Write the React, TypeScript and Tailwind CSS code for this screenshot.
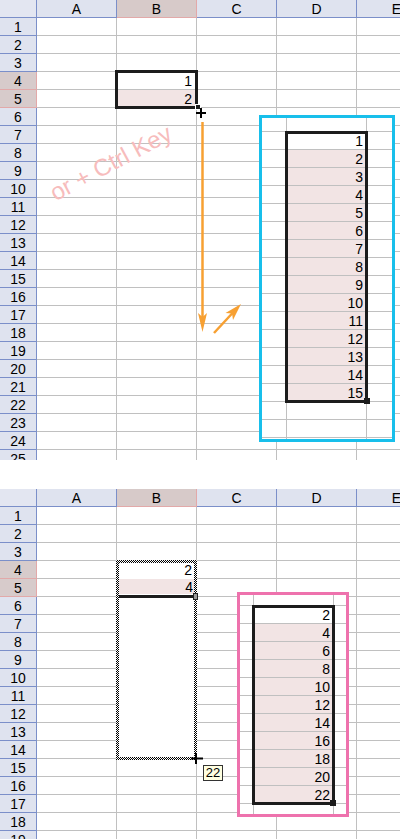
import clsx from "clsx";

const COLS = ["A", "B", "C", "D", "E"];
const GRID = "border-[#c0c0c0]";
const PINK = "bg-[#f2e4e4]";

type Cells = Record<string, { v?: number; pink?: boolean }>;

function Sheet({
  rows,
  className,
  cells = {},
  children,
}: {
  rows: number;
  className: string;
  cells?: Cells;
  children?: React.ReactNode;
}) {
  const selRows = [4, 5];
  return (
    <div className={clsx("relative w-[400px] overflow-hidden", className)}>
      <div className="w-[437px]">
        {/* column headers */}
        <div className="flex h-[18px]">
          <div className="w-[37px] shrink-0 border-r border-b border-[#7b8fc9] bg-[#e3e6f1]" />
          {COLS.map((c) => (
            <div
              key={c}
              className={clsx(
                "w-[80px] shrink-0 border-r border-b pt-[1px] text-center leading-[16px]",
                c === "B"
                  ? "border-[#e2a9a9] bg-[#d7cac9]"
                  : "border-[#7b8fc9] bg-[#dfe3ef]",
              )}
            >
              {c}
            </div>
          ))}
        </div>
        {Array.from({ length: rows }, (_, i) => i + 1).map((r) => {
          const sel = selRows.includes(r);
          return (
            <div key={r} className="flex h-[18px]">
              <div
                className={clsx(
                  "w-[37px] shrink-0 border-r border-b text-center leading-[18px]",
                  sel
                    ? "border-[#e2a9a9] bg-[#d7cbcb]"
                    : "border-[#7b8fc9] bg-[#dfe3ef]",
                )}
              >
                {r}
              </div>
              {COLS.map((c) => {
                const cell = cells[`${c}${r}`];
                return (
                  <div
                    key={c}
                    className={clsx(
                      "w-[80px] shrink-0 border-r border-b pr-[4px] text-right leading-[18px]",
                      GRID,
                      cell?.pink && PINK,
                    )}
                  >
                    {cell?.v}
                  </div>
                );
              })}
            </div>
          );
        })}
      </div>
      {children}
    </div>
  );
}

function Inset({
  frame,
  leftCol,
  shift,
  rowCount,
  values,
  box,
  handle,
}: {
  frame: string;
  leftCol: string;
  shift: string;
  rowCount: number;
  values: number[];
  box: string;
  handle: string;
}) {
  return (
    <div className={clsx("absolute overflow-hidden border-[3px] bg-white", frame)}>
      <div className={shift}>
        {Array.from({ length: rowCount }, (_, k) => {
          const v = values[k - 1];
          return (
            <div key={k} className="flex h-[18px]">
              <div className={clsx("shrink-0 border-r border-b", GRID, leftCol)} />
              <div
                className={clsx(
                  "w-[80px] shrink-0 border-r border-b pr-[3px] text-right leading-[18px]",
                  GRID,
                  k > 1 && v !== undefined && PINK,
                )}
              >
                {v}
              </div>
              <div className={clsx("flex-1 border-b", GRID)} />
            </div>
          );
        })}
      </div>
      <div className={clsx("absolute border-[3px] border-[#1c1c1c]", box)} />
      <div className={clsx("absolute h-[6px] w-[6px] bg-[#1c1c1c]", handle)} />
    </div>
  );
}

export default function App() {
  return (
    <div className="w-[400px] bg-white font-['Liberation_Sans',Arial,sans-serif] text-[14px] text-black">
      <Sheet
        rows={25}
        className="h-[460px]"
        cells={{ B4: { v: 1 }, B5: { v: 2, pink: true } }}
      >
        {/* selected range B4:B5 */}
        <div className="absolute left-[115px] top-[70px] h-[39px] w-[83px] border-[3px] border-[#1c1c1c]" />
        <div className="absolute left-[195px] top-[104px] h-[6px] w-[6px] border border-white bg-[#1c1c1c]" />

        <div className="absolute left-[111px] top-[163px] -translate-x-1/2 -translate-y-1/2 -rotate-[28deg] whitespace-nowrap text-[24px] text-[#f7bcbc]">
          or + Ctrl Key
        </div>

        <svg className="pointer-events-none absolute left-0 top-0" width="400" height="460">
          <path d="M196 113H206M201 108V118" stroke="#000" strokeWidth="2" />
          <line x1="202.5" y1="122" x2="202.5" y2="318" stroke="#f7a032" strokeWidth="2.5" />
          <polygon points="198,313 202.5,317 207,313 202.5,332" fill="#f7a032" />
          <line x1="214" y1="333" x2="233" y2="312.5" stroke="#f7a032" strokeWidth="2.5" />
          <polygon points="241,304 233,320 232,313.5 225.5,313" fill="#f7a032" />
        </svg>

        <Inset
          frame="left-[259px] top-[115px] h-[327px] w-[136px] border-[#18bfeb]"
          leftCol="w-[25px]"
          shift="-mt-[4px]"
          rowCount={19}
          values={Array.from({ length: 15 }, (_, i) => i + 1)}
          box="left-[23px] top-[13px] h-[272px] w-[83px]"
          handle="left-[102px] top-[280px]"
        />
      </Sheet>

      <div className="h-[29px]" />

      <Sheet rows={19} className="h-[350px]">
        {/* marching-ants range while dragging */}
        <div className="absolute left-[116px] top-[71px] h-[200px] w-[81px] bg-[image:repeating-conic-gradient(#000_0%_25%,#fff_0%_50%)] bg-[length:2px_2px] p-[3px]">
          <div className="h-full bg-white">
            <div className="h-[15px] pr-[2px] text-right leading-[15px]">2</div>
            <div className={clsx("mt-[1px] h-[15px] pr-[1px] text-right leading-[17px]", PINK)}>4</div>
            <div className="mt-[1px] h-[3px] w-[74px] bg-[#1c1c1c]" />
          </div>
          <div className="absolute left-[77px] top-[33px] h-[7px] w-[5px] border border-[#222] bg-[#999]" />
        </div>

        <svg className="pointer-events-none absolute left-0 top-0" width="400" height="350">
          <path d="M191 269.5H203M196 264V275" stroke="#000" strokeWidth="2" />
        </svg>

        <div className="absolute left-[203px] top-[276px] h-[16px] w-[20px] border border-[#333] bg-[#ffffe1] text-center text-[13px] leading-[14px]">
          22
        </div>

        <Inset
          frame="left-[237px] top-[103px] h-[225px] w-[112px] border-[#ee72ad]"
          leftCol="w-[14px]"
          shift="-mt-[7px]"
          rowCount={13}
          values={Array.from({ length: 11 }, (_, i) => (i + 1) * 2)}
          box="left-[12px] top-[10px] h-[200px] w-[83px]"
          handle="left-[90px] top-[205px]"
        />
      </Sheet>
    </div>
  );
}
